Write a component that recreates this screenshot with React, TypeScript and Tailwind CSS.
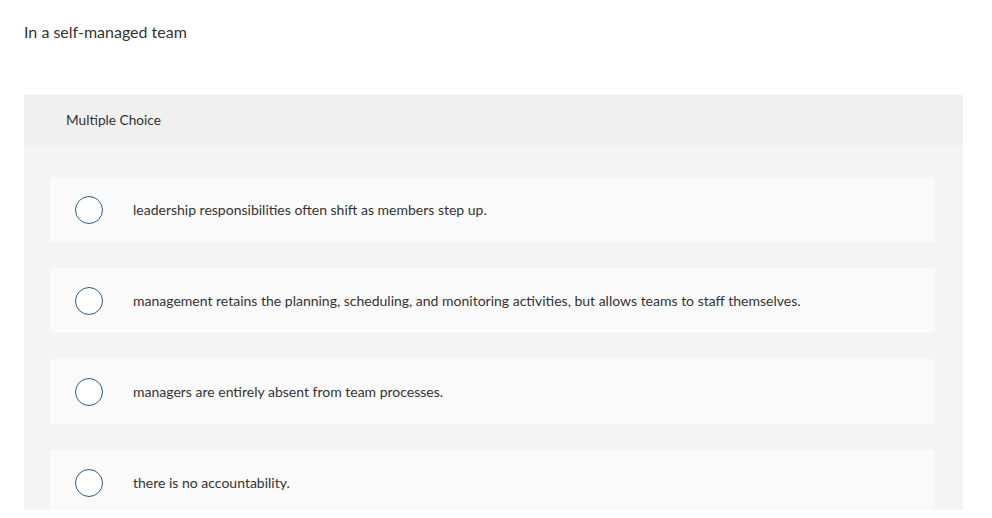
const options = [
  'leadership responsibilities often shift as members step up.',
  'management retains the planning, scheduling, and monitoring activities, but allows teams to staff themselves.',
  'managers are entirely absent from team processes.',
  'there is no accountability.',
]

export default function App() {
  return (
    <div className="h-[510px] overflow-hidden bg-white font-['Lato',sans-serif] text-[#333]">
      <p className="pl-6 pt-[22px] text-[16px] leading-5">In a self-managed team</p>

      <div className="mt-[53px] ml-6 w-[939px]">
        <div className="flex h-[50px] items-center bg-[#f0f0f0] pl-[42px] text-[13.7px]">Multiple Choice</div>
        <div className="flex flex-col gap-[26px] bg-[#f4f4f4] pt-8 pb-8 pl-[26px] pr-[28px]">
          {options.map(opt => (
            <label
              key={opt}
              className="flex h-[65px] cursor-pointer items-center rounded-[3px] bg-[#fafafa] pl-[25px]"
            >
              <span className="h-7 w-7 shrink-0 rounded-full border-[1.5px] border-[#2c5a8a] bg-white" />
              <span className="ml-[30px] text-[14px]">{opt}</span>
            </label>
          ))}
        </div>
      </div>
    </div>
  )
}
